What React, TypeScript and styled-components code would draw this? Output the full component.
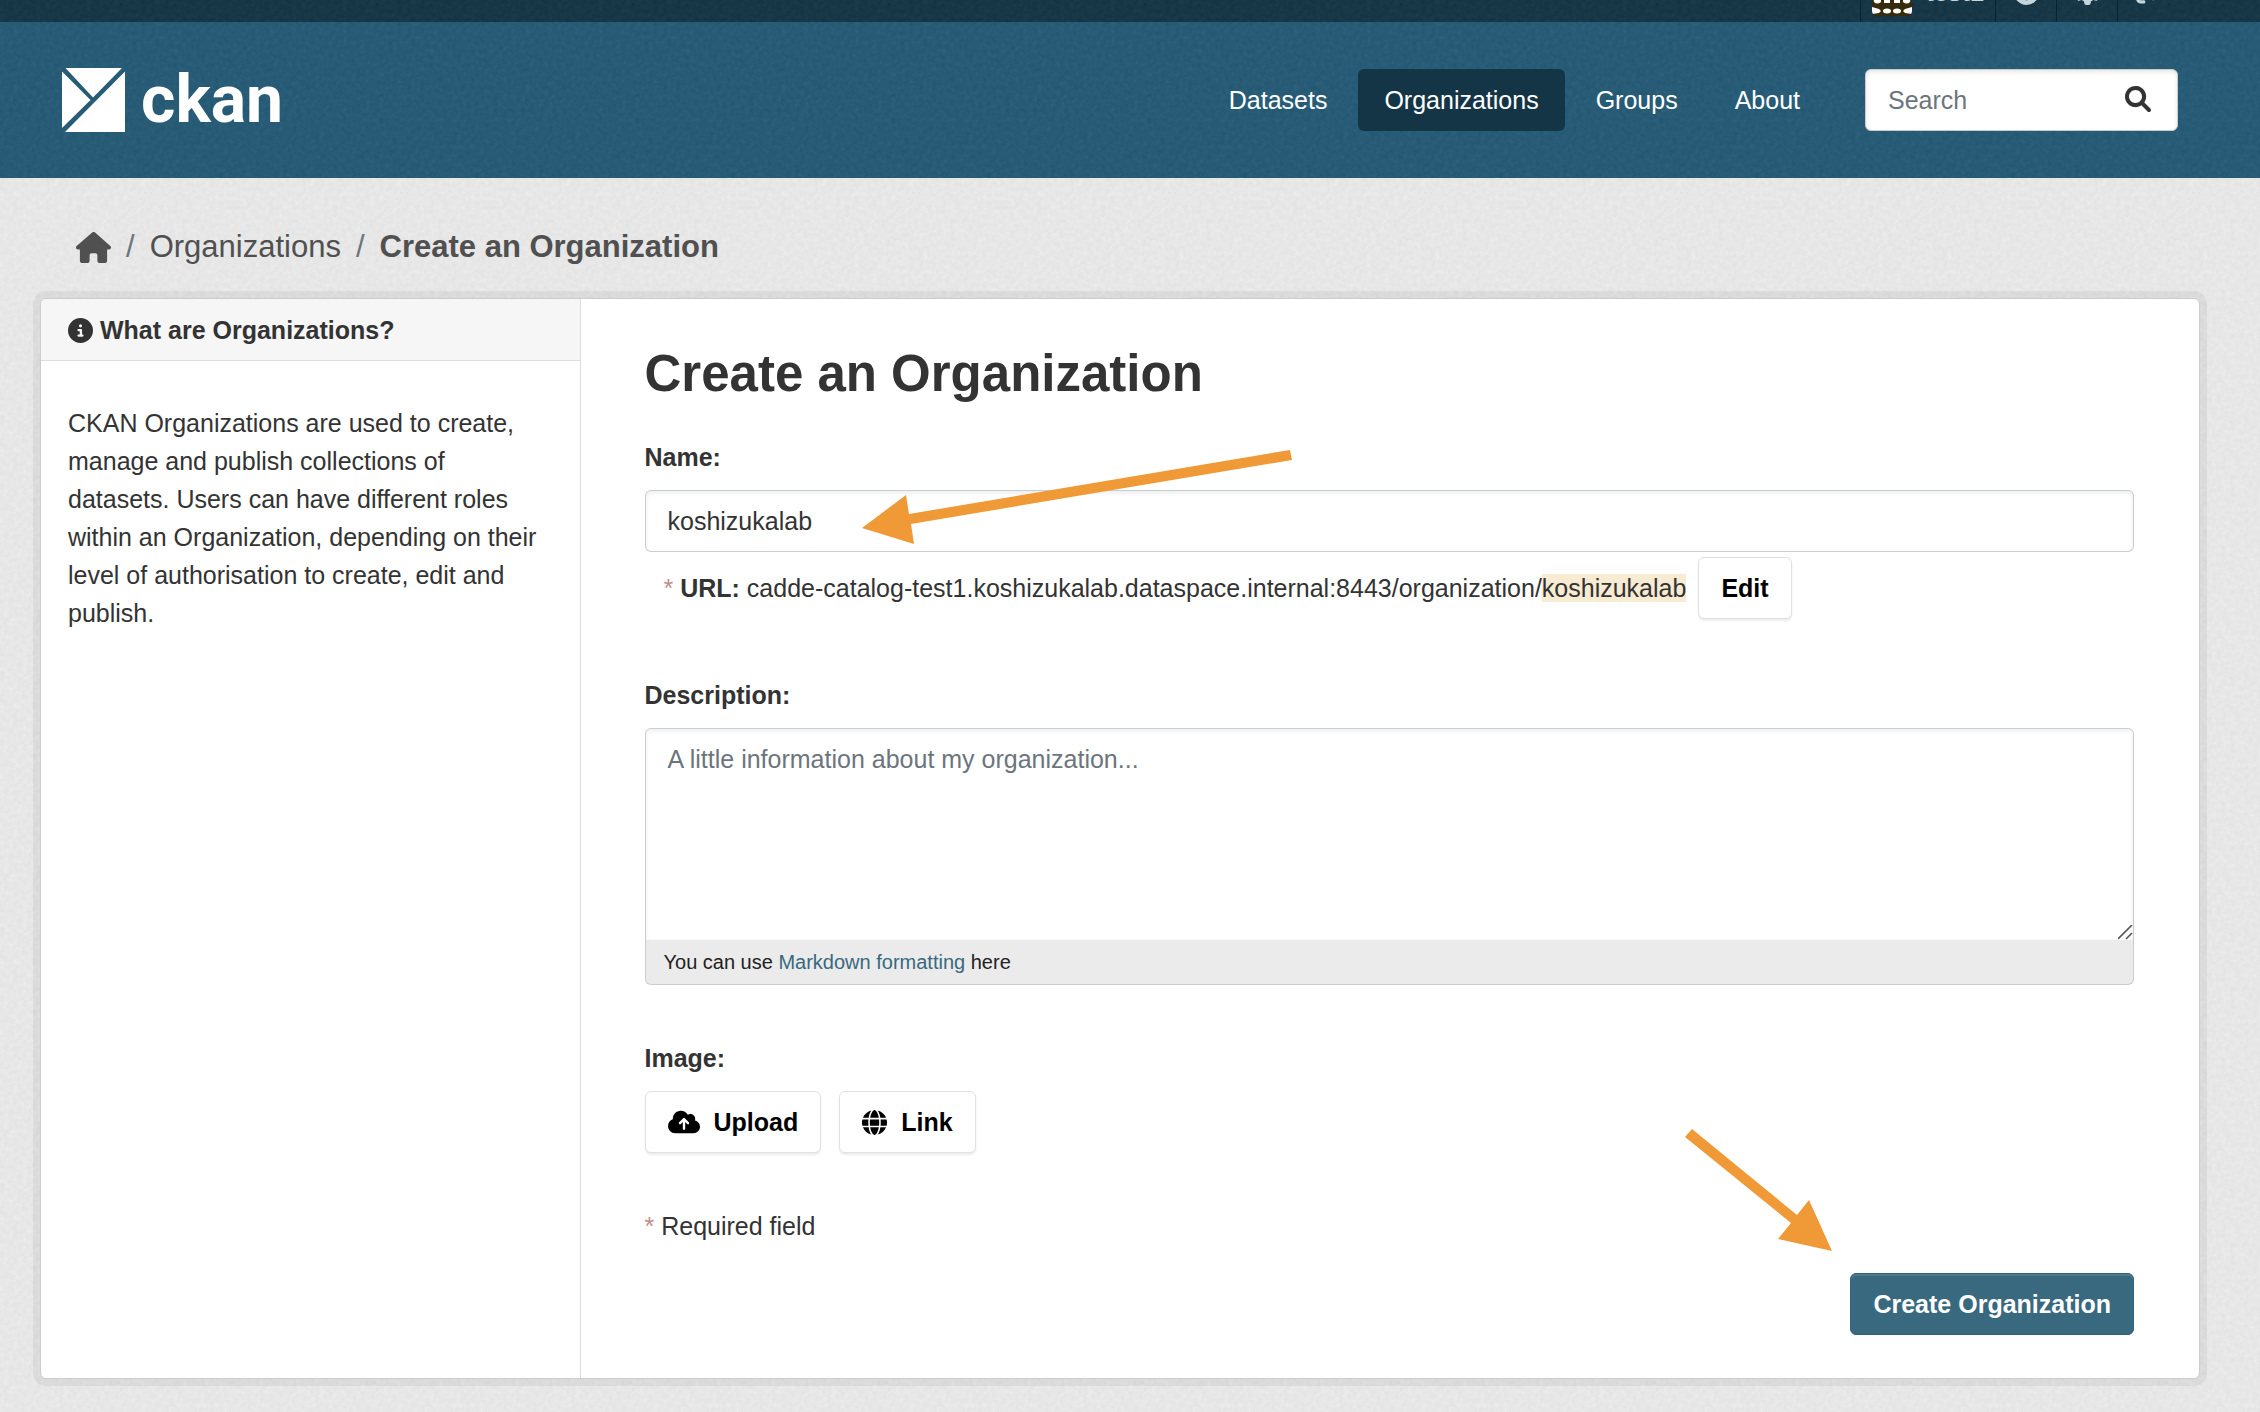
import React from "react";
import styled, { createGlobalStyle } from "styled-components";
import {
  FaCircleInfo,
  FaCloudArrowUp,
  FaGauge,
  FaGear,
  FaGlobe,
  FaHouse,
  FaRightFromBracket,
} from "react-icons/fa6";

const svgUrl = (markup: string) => `url("data:image/svg+xml,${encodeURIComponent(markup)}")`;

const grain = (opacity: number) =>
  svgUrl(
    `<svg xmlns='http://www.w3.org/2000/svg' width='256' height='256'><filter id='n' x='0' y='0' width='100%' height='100%'><feTurbulence type='fractalNoise' baseFrequency='0.22' numOctaves='3' stitchTiles='stitch'/><feColorMatrix values='0 0 0 0 1  0 0 0 0 1  0 0 0 0 1  1.6 0 0 0 -0.45'/></filter><rect width='256' height='256' filter='url(#n)' opacity='${opacity}'/></svg>`
  );

const resizeGrip = svgUrl(
  `<svg xmlns='http://www.w3.org/2000/svg' width='15' height='15'><path d='M0 14L14 0M8 14L14 8' stroke='#555' stroke-width='1.6'/></svg>`
);

const GlobalStyle = createGlobalStyle`
  *, *::before, *::after { box-sizing: border-box; }
  body {
    margin: 0;
    background: #e4e4e4 ${grain(0.3)};
    color: #333;
    font: 25px/38px "Helvetica Neue", "Liberation Sans", Arial, sans-serif;
  }
  h1, h2, p, ul, ol { margin: 0; padding: 0; }
  ul, ol { list-style: none; }
  button, input, textarea { font: inherit; color: inherit; }
  a { color: inherit; text-decoration: none; }
`;

const AccountBar = styled.div`
  height: 22px;
  overflow: hidden;
  display: flex;
  align-items: flex-end;
  justify-content: flex-end;
  padding-right: 82px;
  background: #133444 ${grain(0.04)};
`;

const AccountList = styled.ul`
  display: flex;
`;

const AccountItem = styled.li`
  border-left: 1px solid #0b222e;
`;

const AccountLink = styled.a`
  display: flex;
  align-items: center;
  justify-content: center;
  gap: 14px;
  height: 60px;
  min-width: 60px;
  padding: 0 11px;
  color: #c4d5dc;
  font-weight: bold;
`;

const Avatar = styled.svg`
  align-self: flex-end;
  width: 40px;
  height: 40px;
  margin-bottom: 6px;
  border-radius: 5px;
`;

const Masthead = styled.header`
  display: flex;
  align-items: center;
  justify-content: space-between;
  min-height: 156px;
  padding: 0 82px 0 62px;
  color: #fff;
  background: #235873 ${grain(0.05)};
`;

const Logo = styled.a`
  display: flex;
  align-items: center;
  gap: 16px;
  font: 700 66px/64px Roboto, sans-serif;
`;

const LogoMark = styled.svg`
  width: 63px;
  height: 64px;
`;

const MastheadNav = styled.nav`
  display: flex;
  align-items: center;
  gap: 39px;
`;

const NavList = styled.ul`
  display: flex;
  gap: 5px;
`;

const NavLink = styled.a<{ $active?: boolean }>`
  display: block;
  padding: 12px 26px;
  border-radius: 6px;
  background: ${(p) => (p.$active ? "#143546" : "transparent")};
`;

const SearchForm = styled.form`
  display: flex;
  width: 313px;
  height: 62px;
  border: 1px solid #ccc;
  border-radius: 6px;
  background: #fff;
  box-shadow: inset 0 2px 4px rgba(0, 0, 0, 0.1);
`;

const SearchInput = styled.input`
  flex: 1;
  min-width: 0;
  padding: 0 0 0 22px;
  border: 0;
  outline: 0;
  background: none;
  color: #333;
  &::placeholder { color: #6c757d; opacity: 1; }
`;

const SearchButton = styled.button`
  display: flex;
  align-items: center;
  padding: 0 26px 2px;
  border: 0;
  background: none;
  color: #333;
`;

const Main = styled.main`
  padding: 46px 60px 34px 40px;
`;

const Breadcrumb = styled.ol`
  display: flex;
  align-items: center;
  padding: 0 36px 28px;
  font-size: 31px;
  line-height: 46px;
  color: #505050;
`;

const Crumb = styled.li<{ $current?: boolean }>`
  display: flex;
  align-items: center;
  font-weight: ${(p) => (p.$current ? "bold" : "normal")};
  &:not(:first-child)::before {
    content: "/";
    padding: 0 15px;
    color: #6c757d;
    font-weight: normal;
  }
  a { display: flex; }
`;

const Wrapper = styled.div`
  display: grid;
  grid-template-columns: 1fr 3fr;
  border: 1px solid #ccc;
  border-radius: 6px;
  background: #fff;
  box-shadow: 0 0 0 7px rgba(0, 0, 0, 0.05);
`;

const Sidebar = styled.aside`
  border-right: 1px solid #ddd;
`;

const SidebarHeading = styled.h2`
  display: flex;
  align-items: center;
  gap: 7px;
  padding: 12px 27px 11px;
  border-bottom: 1px solid #ddd;
  border-radius: 5px 0 0;
  background: #f6f6f6;
  font-size: 25px;
  line-height: 38px;
`;

const SidebarText = styled.p`
  padding: 43px 27px;
`;

const Form = styled.form`
  padding: 45px 65px 43px 64px;
`;

const Title = styled.h1`
  margin-bottom: 34px;
  font-size: 51px;
  line-height: 60px;
`;

const Field = styled.div`
  position: relative;
  margin-bottom: 54px;
`;

const Label = styled.label`
  display: block;
  width: fit-content;
  margin-bottom: 14px;
  font-weight: bold;
`;

const TextInput = styled.input`
  display: block;
  width: 100%;
  height: 62px;
  padding: 0 22px;
  border: 1px solid #ccc;
  border-top-color: #c5ced4;
  border-radius: 6px;
  outline: 0;
  background: #fff;
  box-shadow: inset 0 2px 4px rgba(0, 0, 0, 0.08);
`;

const UrlPreview = styled.div`
  display: flex;
  align-items: center;
  gap: 12px;
  padding: 5px 0 3px 19px;
`;

const Required = styled.span`
  color: #c38d8d;
`;

const Slug = styled.span`
  background: #f7ebd2;
`;

const Button = styled.button<{ $primary?: boolean }>`
  display: flex;
  align-items: center;
  gap: 14px;
  height: 62px;
  padding: 0 22px;
  border: 1px solid ${(p) => (p.$primary ? "#32627a" : "#dfe1e8")};
  border-radius: 6px;
  background: ${(p) => (p.$primary ? "#38697f" : "#fff")};
  color: ${(p) => (p.$primary ? "#fff" : "#000")};
  font-weight: bold;
  box-shadow: ${(p) =>
    p.$primary ? "inset 0 2px 0 rgba(255, 255, 255, 0.12)" : "0 2px 2px rgba(0, 0, 0, 0.08)"};
`;

const Editor = styled.div`
  border: 1px solid #ccc;
  border-top-color: #c5ced4;
  border-radius: 6px;
  background: #ebebeb;
  overflow: hidden;
`;

const TextArea = styled.textarea`
  display: block;
  width: 100%;
  height: 211px;
  padding: 11px 22px;
  border: 0;
  outline: 0;
  resize: vertical;
  background: #fff;
  box-shadow: inset 0 2px 4px rgba(0, 0, 0, 0.08);
  &::placeholder { color: #6c757d; opacity: 1; }
  &::-webkit-resizer { background: ${resizeGrip} no-repeat; }
`;

const EditorHint = styled.p`
  padding: 7px 18px;
  font-size: 20px;
  line-height: 30px;
  color: #222;
  a { color: #38697f; }
`;

const ButtonRow = styled.div`
  display: flex;
  gap: 18px;
`;

const Actions = styled.div`
  position: relative;
  display: flex;
  justify-content: flex-end;
  margin-top: 28px;
`;

const NameArrow = styled.svg`
  position: absolute;
  left: 215px;
  top: 10px;
  pointer-events: none;
`;

const SubmitArrow = styled.svg`
  position: absolute;
  right: 301px;
  bottom: 82px;
  pointer-events: none;
`;

const navItems = ["Datasets", "Organizations", "Groups", "About"];

const accountIcons = [
  { label: "Dashboard", Icon: FaGauge },
  { label: "Settings", Icon: FaGear },
  { label: "Log out", Icon: FaRightFromBracket },
];

const SearchIcon = () => (
  <svg width="26" height="26" viewBox="0 0 512 512" fill="currentColor" aria-hidden="true">
    <path d="M500.3 443.7l-119.7-119.7c27.22-40.41 40.65-90.9 33.46-144.7C401.8 87.79 326.8 13.32 235.2 1.723C99.01-15.51-15.51 99.01 1.724 235.2c11.6 91.64 86.08 166.7 177.6 178.9c53.8 7.189 104.3-6.236 144.7-33.46l119.7 119.7c15.62 15.62 40.95 15.62 56.57 0C515.9 484.7 515.9 459.3 500.3 443.7zM79.1 208c0-70.58 57.42-128 128-128s128 57.42 128 128c0 70.58-57.42 128-128 128S79.1 278.6 79.1 208z" />
  </svg>
);

export default function App() {
  return (
    <>
      <GlobalStyle />
      <AccountBar>
        <AccountList>
          <AccountItem>
            <AccountLink href="#">
              <Avatar viewBox="0 0 40 40" aria-hidden="true">
                <rect width="40" height="40" fill="#362c0c" />
                <g fill="#fff">
                  <path d="M0 0h7l4 8-4 8H0zM40 0h-7l-4 8 4 8h7zM15 4h10v10H15z" />
                  <path d="M1 20h8v6q-4 3-7 0zM12 20h6v7h-6zM22 20h6v7h-6zM39 20h-8v6q4 3 7 0z" />
                  <path d="M0 31l7 2 2 2-2 2-7 1zM40 31l-7 2-2 2 2 2 7 1z" />
                  <ellipse cx="15" cy="35" rx="4" ry="2.5" />
                  <ellipse cx="25" cy="35" rx="4" ry="2.5" />
                </g>
              </Avatar>
              test1
            </AccountLink>
          </AccountItem>
          {accountIcons.map(({ label, Icon }) => (
            <AccountItem key={label}>
              <AccountLink href="#" aria-label={label}>
                <Icon size={25} />
              </AccountLink>
            </AccountItem>
          ))}
        </AccountList>
      </AccountBar>

      <Masthead>
        <Logo href="#">
          <LogoMark viewBox="0 0 63 64" aria-hidden="true">
            <g fill="#fff">
              <path d="M3.5 0H60L31 29.5z" />
              <path d="M0 3.5L28.5 32 0 60z" />
              <path d="M63 3.5V64H3z" />
            </g>
          </LogoMark>
          ckan
        </Logo>
        <MastheadNav>
          <NavList>
            {navItems.map((item) => (
              <li key={item}>
                <NavLink href="#" $active={item === "Organizations"}>
                  {item}
                </NavLink>
              </li>
            ))}
          </NavList>
          <SearchForm onSubmit={(e) => e.preventDefault()}>
            <SearchInput type="text" placeholder="Search" aria-label="Search" />
            <SearchButton type="submit" aria-label="Submit search">
              <SearchIcon />
            </SearchButton>
          </SearchForm>
        </MastheadNav>
      </Masthead>

      <Main>
        <Breadcrumb>
          <Crumb>
            <a href="#" aria-label="Home">
              <FaHouse size={35} />
            </a>
          </Crumb>
          <Crumb>
            <a href="#">Organizations</a>
          </Crumb>
          <Crumb $current>
            <a href="#">Create an Organization</a>
          </Crumb>
        </Breadcrumb>

        <Wrapper>
          <Sidebar>
            <SidebarHeading>
              <FaCircleInfo size={25} />
              What are Organizations?
            </SidebarHeading>
            <SidebarText>
              CKAN Organizations are used to create, manage and publish collections of datasets. Users can
              have different roles within an Organization, depending on their level of authorisation to
              create, edit and publish.
            </SidebarText>
          </Sidebar>

          <Form onSubmit={(e) => e.preventDefault()}>
            <Title>Create an Organization</Title>

            <Field>
              <Label htmlFor="field-name">Name:</Label>
              <TextInput id="field-name" type="text" defaultValue="koshizukalab" />
              <UrlPreview>
                <span>
                  <Required>*</Required> <strong>URL:</strong>{" "}
                  cadde-catalog-test1.koshizukalab.dataspace.internal:8443/organization/
                  <Slug>koshizukalab</Slug>
                </span>
                <Button type="button">Edit</Button>
              </UrlPreview>
              <NameArrow width="434" height="98" viewBox="0 0 434 98" aria-hidden="true">
                <path
                  d="M430 2L432 12L51 76L54 96L2 80L46 47L49 66z"
                  fill="#f09a37"
                />
              </NameArrow>
            </Field>

            <Field>
              <Label htmlFor="field-description">Description:</Label>
              <Editor>
                <TextArea
                  id="field-description"
                  placeholder="A little information about my organization..."
                />
                <EditorHint>
                  You can use <a href="#">Markdown formatting</a> here
                </EditorHint>
              </Editor>
            </Field>

            <Field>
              <Label htmlFor="field-image-upload">Image:</Label>
              <ButtonRow>
                <Button type="button" id="field-image-upload">
                  <FaCloudArrowUp size={32} />
                  Upload
                </Button>
                <Button type="button">
                  <FaGlobe size={25} />
                  Link
                </Button>
              </ButtonRow>
            </Field>

            <p>
              <Required>*</Required> Required field
            </p>

            <Actions>
              <SubmitArrow width="150" height="126" viewBox="0 0 150 126" aria-hidden="true">
                <path d="M9 2L2 10L108 96L95 112L149 124L126 73L114 88z" fill="#f09a37" />
              </SubmitArrow>
              <Button type="submit" $primary>
                Create Organization
              </Button>
            </Actions>
          </Form>
        </Wrapper>
      </Main>
    </>
  );
}
